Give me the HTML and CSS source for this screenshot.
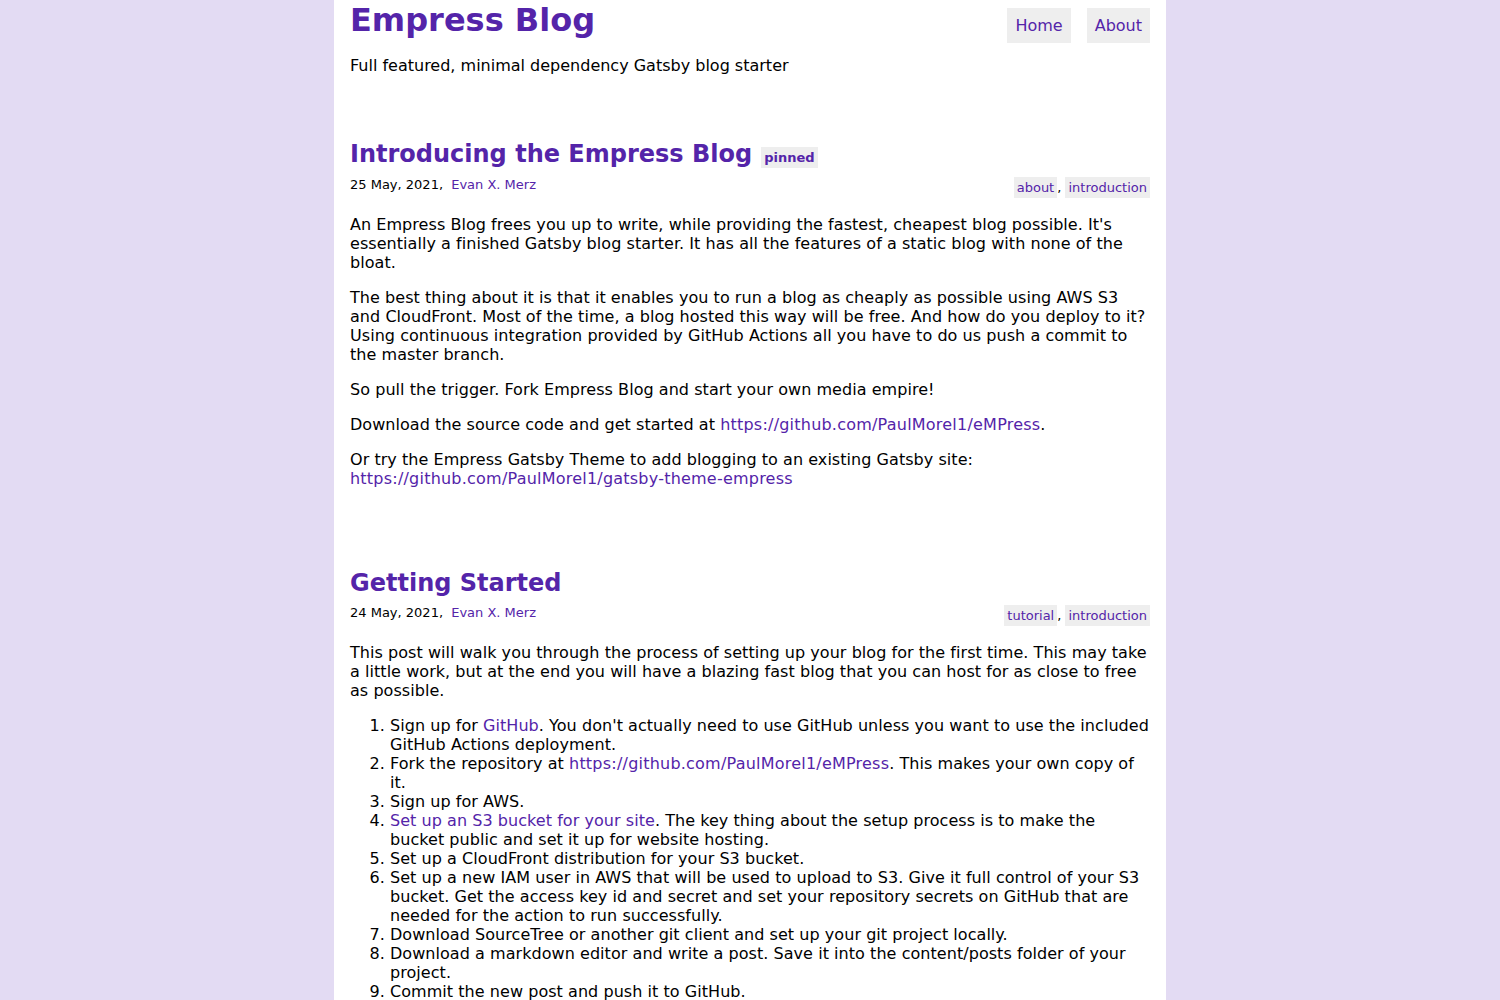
FILE: index.html
```html
<!DOCTYPE html>
<html>
<head>
<meta charset="utf-8">
<title>Empress Blog</title>
<link rel="stylesheet" href="styles.css">
</head>
<body>
<div class="page">
  <header class="site-header">
    <div class="brand">
      <h1 class="site-title"><a href="#">Empress Blog</a></h1>
      <p class="site-desc">Full featured, minimal dependency Gatsby blog starter</p>
    </div>
    <nav class="nav">
      <a class="nav-link" href="#">Home</a>
      <a class="nav-link" href="#">About</a>
    </nav>
  </header>

  <article class="post">
    <h2 class="post-title pinned-title"><a href="#">Introducing the Empress Blog</a> <span class="pinned">pinned</span></h2>
    <div class="meta">
      <div class="meta-left">25 May, 2021, <a href="#">Evan X. Merz</a></div>
      <div class="tags"><a class="tag" href="#">about</a>, <a class="tag" href="#">introduction</a></div>
    </div>
    <div class="post-body">
      <p>An Empress Blog frees you up to write, while providing the fastest, cheapest blog possible. It's essentially a finished Gatsby blog starter. It has all the features of a static blog with none of the bloat.</p>
      <p>The best thing about it is that it enables you to run a blog as cheaply as possible using AWS S3 and CloudFront. Most of the time, a blog hosted this way will be free. And how do you deploy to it? Using continuous integration provided by GitHub Actions all you have to do us push a commit to the master branch.</p>
      <p>So pull the trigger. Fork Empress Blog and start your own media empire!</p>
      <p>Download the source code and get started at <a class="url" href="#">https://github.com/PaulMorel1/eMPress</a>.</p>
      <p>Or try the Empress Gatsby Theme to add blogging to an existing Gatsby site: <a class="url" href="#">https://github.com/PaulMorel1/gatsby-theme-empress</a></p>
    </div>
  </article>

  <article class="post">
    <h2 class="post-title"><a href="#">Getting Started</a></h2>
    <div class="meta">
      <div class="meta-left">24 May, 2021, <a href="#">Evan X. Merz</a></div>
      <div class="tags"><a class="tag" href="#">tutorial</a>, <a class="tag" href="#">introduction</a></div>
    </div>
    <div class="post-body">
      <p>This post will walk you through the process of setting up your blog for the first time. This may take a little work, but at the end you will have a blazing fast blog that you can host for as close to free as possible.</p>
      <ol>
        <li>Sign up for <a href="#">GitHub</a>. You don't actually need to use GitHub unless you want to use the included GitHub Actions deployment.</li>
        <li>Fork the repository at <a class="url" href="#">https://github.com/PaulMorel1/eMPress</a>. This makes your own copy of it.</li>
        <li>Sign up for AWS.</li>
        <li><a href="#">Set up an S3 bucket for your site</a>. The key thing about the setup process is to make the bucket public and set it up for website hosting.</li>
        <li>Set up a CloudFront distribution for your S3 bucket.</li>
        <li>Set up a new IAM user in AWS that will be used to upload to S3. Give it full control of your S3 bucket. Get the access key id and secret and set your repository secrets on GitHub that are needed for the action to run successfully.</li>
        <li>Download SourceTree or another git client and set up your git project locally.</li>
        <li>Download a markdown editor and write a post. Save it into the content/posts folder of your project.</li>
        <li>Commit the new post and push it to GitHub.</li>
      </ol>
    </div>
  </article>
</div>
</body>
</html>
```

FILE: styles.css
```css
html, body {
  margin: 0;
  padding: 0;
}
body {
  background: #e3dbf3;
  font-family: Verdana, "DejaVu Sans", sans-serif;
  font-size: 16px;
  line-height: 19px;
  color: #000;
}
a {
  color: #5424a9;
  text-decoration: none;
}
.page {
  width: 800px;
  margin: 0 auto;
  background: #fff;
  padding: 0 16px 40px;
  min-height: 1000px;
}
.site-header {
  display: flex;
  justify-content: space-between;
  align-items: flex-start;
}
.site-title {
  margin: 0;
  padding-top: 2px;
  font-size: 32px;
  line-height: 36px;
  font-weight: bold;
}
.site-desc {
  margin: 18px 0 0;
}
.nav {
  display: flex;
  gap: 16px;
  padding-top: 8px;
}
.nav-link {
  background: #eee;
  font-size: 16px;
  line-height: 19px;
  padding: 8px 8px;
}
.post {
  margin-top: 64px;
}
.post + .post {
  margin-top: 81px;
}
.post-title {
  margin: 0;
  font-size: 24px;
  line-height: 29px;
  font-weight: bold;
  display: flex;
  align-items: center;
  gap: 9px;
}
.pinned-title {
  line-height: 30px;
  padding-bottom: 1px;
}
.pinned {
  background: #eee;
  color: #5424a9;
  font-size: 13px;
  line-height: 15px;
  padding: 3px 3px;
  margin-top: 6px;
}
.meta {
  display: flex;
  justify-content: space-between;
  align-items: flex-start;
  font-size: 13px;
  line-height: 16px;
  margin-top: 7px;
}
.meta-left a {
  margin-left: 4px;
}
.tags {
  margin-top: 1px;
  padding-top: 2px;
}
.tag {
  background: #eee;
  padding: 3px 3px;
}
.post-body {
  margin-top: 19px;
  letter-spacing: 0.05px;
}
.post-body .url {
  letter-spacing: 0.22px;
}
.post-body p {
  margin: 0 0 16px;
}
.post-body ol {
  margin: 0;
  padding-left: 40px;
}
```
